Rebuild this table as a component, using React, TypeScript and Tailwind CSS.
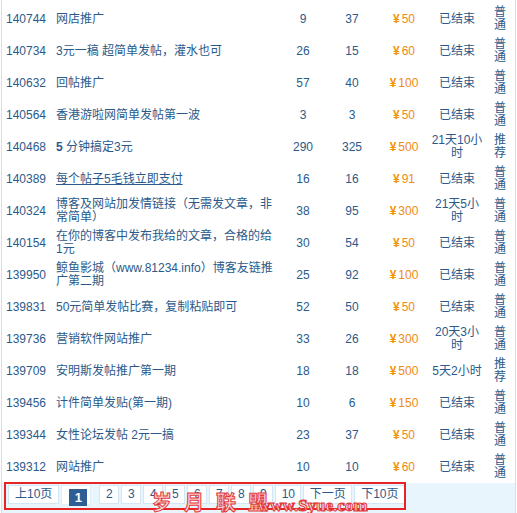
import React from 'react';

type Row = {
  id: string;
  title: React.ReactNode;
  a: string;
  b: string;
  price: string;
  status: string;
  kind: string;
};

const rows: Row[] = [
  { id: '140744', title: '网店推广', a: '9', b: '37', price: '50', status: '已结束', kind: '普通' },
  { id: '140734', title: '3元一稿 超简单发帖，灌水也可', a: '26', b: '15', price: '60', status: '已结束', kind: '普通' },
  { id: '140632', title: '回帖推广', a: '57', b: '40', price: '100', status: '已结束', kind: '普通' },
  { id: '140564', title: '香港游啦网简单发帖第一波', a: '3', b: '3', price: '50', status: '已结束', kind: '普通' },
  {
    id: '140468',
    title: (
      <>
        <b className="font-bold">5</b> 分钟搞定3元
      </>
    ),
    a: '290', b: '325', price: '500', status: '21天10小时', kind: '推荐',
  },
  { id: '140389', title: <span className="underline">每个帖子5毛钱立即支付</span>, a: '16', b: '16', price: '91', status: '已结束', kind: '普通' },
  { id: '140324', title: '博客及网站加发情链接（无需发文章，非常简单）', a: '38', b: '95', price: '300', status: '21天5小时', kind: '普通' },
  { id: '140154', title: '在你的博客中发布我给的文章，合格的给1元', a: '30', b: '54', price: '50', status: '已结束', kind: '普通' },
  { id: '139950', title: '鲸鱼影城（www.81234.info）博客友链推广第二期', a: '25', b: '92', price: '100', status: '已结束', kind: '普通' },
  { id: '139831', title: '50元简单发帖比赛，复制粘贴即可', a: '52', b: '50', price: '50', status: '已结束', kind: '普通' },
  { id: '139736', title: '营销软件网站推广', a: '33', b: '26', price: '300', status: '20天3小时', kind: '普通' },
  { id: '139709', title: '安明斯发帖推广第一期', a: '18', b: '18', price: '500', status: '5天2小时', kind: '推荐' },
  { id: '139456', title: '计件简单发贴(第一期)', a: '10', b: '6', price: '150', status: '已结束', kind: '普通' },
  { id: '139344', title: '女性论坛发帖 2元一搞', a: '23', b: '37', price: '50', status: '已结束', kind: '普通' },
  { id: '139312', title: '网站推广', a: '10', b: '10', price: '60', status: '已结束', kind: '普通' },
];

const pages = ['2', '3', '4', '5', '6', '7', '8', '9'];

export default function App() {
  return (
    <div
      className="relative w-[517px] h-[513px] overflow-hidden bg-white text-[12px] leading-[13px] text-[#2b5a8a]"
      style={{ fontFamily: '"Liberation Sans", "Noto Sans CJK SC", sans-serif' }}
    >
      <div className="ml-[1px] w-[515px] h-full border-x border-[#cde3f2] flex flex-col">
        <div className="pt-[3px] pl-[1px]">
          <table className="table-fixed border-collapse w-[511px]">
            <colgroup>
              <col className="w-[51px]" />
              <col className="w-[226px]" />
              <col className="w-[46px]" />
              <col className="w-[52px]" />
              <col className="w-[52px]" />
              <col className="w-[54px]" />
              <col className="w-[30px]" />
            </colgroup>
            <tbody>
              {rows.map((r) => (
                <tr key={r.id} className="h-[32px]">
                  <td className="pl-[3px] align-middle">{r.id}</td>
                  <td className="pl-[2px] pr-[4px] align-middle">{r.title}</td>
                  <td className="text-center align-middle">{r.a}</td>
                  <td className="text-center align-middle">{r.b}</td>
                  <td className="text-center align-middle text-[#ee8a16]">
                    <b className="font-bold text-[#f39400]">¥</b>
                    <span className="ml-[2px]">{r.price}</span>
                  </td>
                  <td className="text-center align-middle">{r.status}</td>
                  <td className="pl-[10px] pr-[6px] align-middle">{r.kind}</td>
                </tr>
              ))}
            </tbody>
          </table>
        </div>

        <div className="flex-1 bg-[#e9f5fc] flex items-start pt-[2px] pl-[6px] gap-[2px]">
          <span className="h-[19px] px-[6px] flex items-center bg-white border border-[#d3e6f5]">上10页</span>
          <span className="relative h-[20px] w-[30px] bg-white border border-[#e2eef8]">
            <span className="absolute left-[7px] top-[3px] w-[18px] h-[17px] bg-[#2d5f95] text-white font-bold text-[13px] flex items-center justify-center">
              1
            </span>
          </span>
          <span className="w-[4px]" />
          {pages.map((p) => (
            <span key={p} className="h-[19px] w-[20px] flex items-center justify-center bg-white border border-[#d3e6f5]">
              {p}
            </span>
          ))}
          <span className="h-[19px] w-[26px] flex items-center justify-center bg-white border border-[#d3e6f5]">10</span>
          <span className="h-[19px] w-[49px] flex items-center justify-center bg-white border border-[#d3e6f5]">下一页</span>
          <span className="h-[19px] w-[51px] flex items-center justify-center bg-white border border-[#d3e6f5]">下10页</span>
        </div>
      </div>

      {/* annotation box */}
      <div className="absolute left-[4px] top-[482px] w-[402px] h-[28px] border-2 border-[#e52424]" />

      {/* watermark */}
      <div
        className="absolute left-[152px] top-[491px] text-[20px] leading-[22px] font-bold tracking-[12px] text-[#fbd3d3] [-webkit-text-stroke:1px_#e23a3a]"
        style={{ fontFamily: '"Noto Sans CJK SC", sans-serif' }}
      >
        岁月联盟
      </div>
      <div
        className="absolute left-[258px] top-[497px] text-[17px] leading-[17px] font-bold text-[#fbd3d3] [-webkit-text-stroke:1px_#e23a3a]"
        style={{ fontFamily: '"Liberation Serif", serif' }}
      >
        www.Syue.com
      </div>
    </div>
  );
}
